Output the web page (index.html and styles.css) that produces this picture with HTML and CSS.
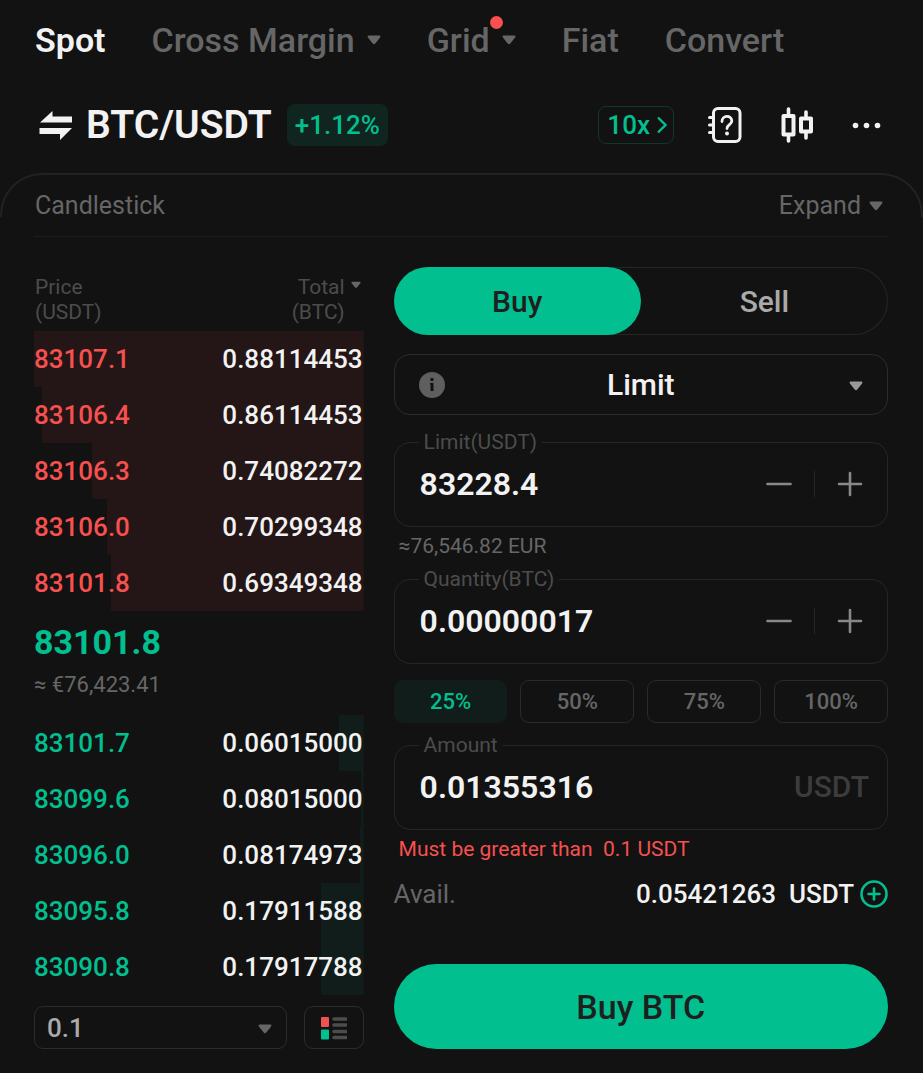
FILE: index.html
```html
<!DOCTYPE html>
<html lang="en">
<head>
    <meta charset="UTF-8">
    <meta name="viewport" content="width=device-width, initial-scale=1.0">
    <title>BTC/USDT Spot</title>
    <link rel="stylesheet" href="styles.css">
</head>
<body>
    <svg class="sprite" aria-hidden="true">
        <symbol id="caret" viewBox="0 0 14 10">
            <path d="M1.5 0.5h11c1 0 1.2 1.2 0.6 1.9L8.3 8.6c-0.8 0.9-1.8 0.9-2.6 0L0.9 2.4C0.3 1.7 0.5 0.5 1.5 0.5z" fill="currentColor"/>
        </symbol>
        <symbol id="minus" viewBox="0 0 26 26">
            <path d="M1.500 13h23" stroke="currentColor" stroke-width="2.6" stroke-linecap="round"/>
        </symbol>
        <symbol id="plus" viewBox="0 0 26 26">
            <path d="M2 13h22M13 2v22" stroke="currentColor" stroke-width="2.6" stroke-linecap="round"/>
        </symbol>
    </svg>

    <nav class="tabs">
        <a href="#" class="active">Spot</a>
        <a href="#">Cross Margin <svg class="caret"><use href="#caret"/></svg></a>
        <a href="#" class="has-dot">Grid <svg class="caret"><use href="#caret"/></svg></a>
        <a href="#">Fiat</a>
        <a href="#">Convert</a>
    </nav>

    <header class="pair">
        <button class="icon-btn swap" aria-label="Switch pair">
            <svg width="36" height="36" viewBox="0 0 36 36" fill="currentColor">
                <path d="M2 15.500L14.500 4v5.500H34v6z"/>
                <path d="M34 21L22 33v-6H1.500v-6z"/>
            </svg>
        </button>
        <h1>BTC/USDT</h1>
        <span class="change">+1.12%</span>
        <div class="tools">
            <button class="leverage">10x
                <svg width="10" height="18" viewBox="0 0 10 18" fill="none" stroke="currentColor" stroke-width="2.400"><path d="M1 1.500L8.500 9 1 16.500"/></svg>
            </button>
            <button class="icon-btn" aria-label="Guide">
                <svg width="36" height="38" viewBox="0 0 36 38" fill="none" stroke="currentColor" stroke-width="3" stroke-linecap="round">
                    <rect x="5.500" y="2.500" width="26.500" height="33" rx="4.500"/>
                    <path d="M1.500 11.500h4M1.500 19h4M1.500 26.500h4" stroke-width="3"/>
                    <path d="M14 15.500c0-6.800 9.800-6.600 9.800-0.500 0 3.800-4.800 3.600-4.800 7.500" stroke-width="2.800"/>
                    <circle cx="19" cy="27.500" r="2" fill="currentColor" stroke="none"/>
                </svg>
            </button>
            <button class="icon-btn" aria-label="Chart">
                <svg width="36" height="38" viewBox="0 0 36 38" fill="none" stroke="currentColor" stroke-width="4">
                    <path d="M5.500 10h10v18.500h-10zM23 12.500h10v13H23z" stroke-linejoin="round"/>
                    <path d="M10.500 3v6M10.500 29v6M28 6v6M28 26v6" stroke-width="3.600" stroke-linecap="round"/>
                </svg>
            </button>
            <button class="icon-btn" aria-label="More">
                <svg width="36" height="38" viewBox="0 0 36 38" fill="currentColor">
                    <circle cx="7.500" cy="19.500" r="2.800"/><circle cx="18.500" cy="19.500" r="2.800"/><circle cx="29.500" cy="19.500" r="2.800"/>
                </svg>
            </button>
        </div>
    </header>

    <main class="panel">
        <div class="chart-bar">
            <span>Candlestick</span>
            <button class="expand">Expand <svg class="caret"><use href="#caret"/></svg></button>
        </div>

        <div class="trade">
            <section class="book">
                <table>
                    <thead>
                        <tr>
                            <th>Price<br>(USDT)</th>
                            <th class="total">Total<svg class="caret"><use href="#caret"/></svg><br>(BTC)</th>
                        </tr>
                    </thead>
                    <tbody class="asks">
                        <tr style="--depth: 100%"><td>83107.1</td><td>0.88114453</td></tr>
                        <tr style="--depth: 97.6%"><td>83106.4</td><td>0.86114453</td></tr>
                        <tr style="--depth: 82.4%"><td>83106.3</td><td>0.74082272</td></tr>
                        <tr style="--depth: 77.9%"><td>83106.0</td><td>0.70299348</td></tr>
                        <tr style="--depth: 76.7%"><td>83101.8</td><td>0.69349348</td></tr>
                    </tbody>
                    <tbody class="last">
                        <tr>
                            <td colspan="2">
                                <strong>83101.8</strong>
                                <span>≈ €76,423.41</span>
                            </td>
                        </tr>
                    </tbody>
                    <tbody class="bids">
                        <tr style="--depth: 7.4%"><td>83101.7</td><td>0.06015000</td></tr>
                        <tr style="--depth: 0.9%"><td>83099.6</td><td>0.08015000</td></tr>
                        <tr style="--depth: 1.2%"><td>83096.0</td><td>0.08174973</td></tr>
                        <tr style="--depth: 13%"><td>83095.8</td><td>0.17911588</td></tr>
                        <tr style="--depth: 13%"><td>83090.8</td><td>0.17917788</td></tr>
                    </tbody>
                </table>
                <div class="book-options">
                    <div class="select step">
                        <select aria-label="Price step">
                            <option>0.1</option>
                            <option>1</option>
                            <option>10</option>
                        </select>
                        <svg class="caret"><use href="#caret"/></svg>
                    </div>
                    <button class="layout-btn" aria-label="Order book layout">
                        <svg width="26" height="24" viewBox="0 0 26 24">
                            <rect x="0" y="1" width="8" height="10" rx="1" fill="#ef5350"/>
                            <rect x="0" y="13.500" width="8" height="10" rx="1" fill="#02bf8f"/>
                            <path d="M13 3h12M13 9h12M13 15.500h12M13 21.500h12" stroke="#4c4c4c" stroke-width="3.600" stroke-linecap="round"/>
                        </svg>
                    </button>
                </div>
            </section>

            <form class="order">
                <div class="sides">
                    <button type="button" class="active">Buy</button>
                    <button type="button">Sell</button>
                </div>

                <div class="select type">
                    <svg class="info" viewBox="0 0 26 26">
                        <circle cx="13" cy="13" r="13" fill="#5f5f5f"/>
                        <circle cx="13" cy="7.500" r="1.700" fill="#121212"/>
                        <path d="M11 11h3.500v8h-3v-6.500H11z" fill="#121212"/>
                    </svg>
                    <select aria-label="Order type">
                        <option>Limit</option>
                        <option>Market</option>
                    </select>
                    <svg class="caret"><use href="#caret"/></svg>
                </div>

                <fieldset>
                    <legend><label for="price">Limit(USDT)</label></legend>
                    <input type="text" id="price" value="83228.4">
                    <button type="button" aria-label="Decrease price"><svg><use href="#minus"/></svg></button>
                    <button type="button" aria-label="Increase price"><svg><use href="#plus"/></svg></button>
                </fieldset>
                <p class="note">≈76,546.82 EUR</p>

                <fieldset>
                    <legend><label for="quantity">Quantity(BTC)</label></legend>
                    <input type="text" id="quantity" value="0.00000017">
                    <button type="button" aria-label="Decrease quantity"><svg><use href="#minus"/></svg></button>
                    <button type="button" aria-label="Increase quantity"><svg><use href="#plus"/></svg></button>
                </fieldset>

                <div class="percents">
                    <button type="button" class="active">25%</button>
                    <button type="button">50%</button>
                    <button type="button">75%</button>
                    <button type="button">100%</button>
                </div>

                <fieldset class="amount">
                    <legend><label for="amount">Amount</label></legend>
                    <input type="text" id="amount" value="0.01355316">
                    <span class="unit">USDT</span>
                </fieldset>
                <p class="note error">Must be greater than&nbsp; 0.1 USDT</p>

                <div class="avail">
                    <span>Avail.</span>
                    <span class="balance">0.05421263&nbsp; USDT</span>
                    <button type="button" class="icon-btn" aria-label="Deposit">
                        <svg width="28" height="28" viewBox="0 0 28 28" fill="none" stroke="currentColor" stroke-width="2.600" stroke-linecap="round">
                            <circle cx="14" cy="14" r="12.500"/>
                            <path d="M8.500 14h11M14 8.500v11"/>
                        </svg>
                    </button>
                </div>

                <button type="submit" class="submit">Buy BTC</button>
            </form>
        </div>
    </main>
</body>
</html>
```
FILE: styles.css
```css
* {
    box-sizing: border-box;
}

body {
    margin: 0;
    background-color: #121212;
    color: #f2f2f2;
    font-family: Roboto, sans-serif;
    font-size: 26px;
    line-height: 32px;
}

button, input, select {
    font-family: inherit;
    color: inherit;
    background: none;
    border: 0;
    padding: 0;
    margin: 0;
}

button {
    cursor: pointer;
}

svg {
    display: block;
}

.sprite {
    position: absolute;
    width: 0;
    height: 0;
}

.caret {
    width: 14px;
    height: 10px;
    flex: none;
}

/* top navigation */
.tabs {
    display: flex;
    gap: 46px;
    padding: 20px 35px 0;
    font-size: 34px;
    font-weight: 500;
    line-height: 40px;
}

.tabs a {
    display: flex;
    align-items: center;
    gap: 12px;
    color: #666;
    text-decoration: none;
    white-space: nowrap;
}

.tabs a.active {
    color: #f2f2f2;
    font-weight: 600;
}

.has-dot {
    position: relative;
}

.has-dot::after {
    content: "";
    position: absolute;
    top: -4px;
    right: 13px;
    width: 13px;
    height: 13px;
    border-radius: 50%;
    background-color: #f6504f;
}

/* pair header */
.pair {
    display: flex;
    align-items: center;
    height: 42px;
    margin: 44px 39px 27px 38px;
}

.pair h1 {
    margin: 0 15px 0 12px;
    font-size: 39px;
    font-weight: 600;
    line-height: 42px;
}

.change {
    padding: 0 8px;
    border-radius: 8px;
    background-color: #10251f;
    color: #02bf8f;
    font-weight: 500;
    line-height: 42px;
}

.tools {
    display: flex;
    align-items: center;
    gap: 34px;
    margin-left: auto;
}

.leverage {
    display: flex;
    align-items: center;
    gap: 7px;
    height: 38px;
    padding: 0 6px 0 8px;
    border: 1px solid #10372c;
    border-radius: 8px;
    color: #02bf8f;
    font-size: 26px;
    font-weight: 500;
}

.icon-btn {
    display: block;
}

/* panel */
.panel {
    position: relative;
    padding: 2px 35px 24px 34px;
}

.panel::before {
    content: "";
    position: absolute;
    top: 0;
    left: 0;
    right: 0;
    height: 42px;
    border: 2px solid #222;
    border-bottom: 0;
    border-radius: 42px 42px 0 0;
    pointer-events: none;
}

.chart-bar {
    display: flex;
    justify-content: space-between;
    align-items: center;
    height: 62px;
    padding: 0 5px 0 1px;
    border-bottom: 1px solid #1d1d1d;
    color: #666;
    font-size: 25px;
}

.expand {
    display: flex;
    align-items: center;
    gap: 8px;
    font-size: 25px;
}

.trade {
    display: grid;
    grid-template-columns: 2fr 3fr;
    gap: 30px;
    padding-top: 30px;
}

/* order book */
.book {
    display: flex;
    flex-direction: column;
    justify-content: space-between;
}

.book table {
    width: 100%;
    border-collapse: collapse;
    font-weight: 500;
}

.book th {
    height: 64px;
    padding: 2px 0 0 1px;
    color: #4c4c4c;
    font-size: 21px;
    font-weight: 400;
    line-height: 25px;
    text-align: left;
}

.book th.total {
    padding-right: 19px;
    text-align: right;
}

.total .caret {
    display: inline-block;
    width: 10px;
    height: 8px;
    margin: 0 -16px 5px 6px;
    color: #666;
}

.book td {
    height: 56px;
    padding: 0;
}

.asks td:last-child,
.bids td:last-child {
    padding-right: 1px;
    text-align: right;
}

.asks tr {
    background: linear-gradient(to left, #241616 var(--depth), transparent var(--depth));
}

.bids tr {
    background: linear-gradient(to left, #101d1a var(--depth), transparent var(--depth));
}

.asks td:first-child {
    color: #f6504f;
}

.bids td:first-child {
    color: #02bf8f;
}

.book .last td {
    height: 104px;
}

.last strong {
    display: block;
    color: #02bf8f;
    font-size: 34px;
    font-weight: 700;
    line-height: 44px;
}

.last span {
    display: block;
    color: #666;
    font-size: 22px;
    font-weight: 400;
    line-height: 42px;
}

.book-options {
    display: flex;
    gap: 17px;
    height: 43px;
}

.select {
    position: relative;
}

.select select {
    width: 100%;
    height: 100%;
    appearance: none;
    border: 1px solid #2c2c2c;
    font-weight: 500;
}

.select option {
    background-color: #121212;
}

.select .caret {
    position: absolute;
    top: calc(50% - 4px);
    right: 25px;
    color: #999;
    pointer-events: none;
}

.step {
    flex: 1;
}

.step select {
    padding-left: 12px;
    border-radius: 9px;
    color: #aaa;
    font-size: 26px;
}

.step .caret {
    right: 15px;
    color: #666;
}

.layout-btn {
    display: flex;
    align-items: center;
    justify-content: center;
    width: 60px;
    border: 1px solid #2c2c2c;
    border-radius: 9px;
}

/* order form */
.order {
    display: flex;
    flex-direction: column;
    min-width: 0;
}

.sides {
    display: flex;
    height: 68px;
    border-radius: 34px;
    box-shadow: inset 0 0 0 1px #262626;
}

.sides button {
    flex: 1;
    border-radius: 34px;
    color: #aaa;
    font-size: 30px;
    font-weight: 500;
}

.sides button.active {
    background-color: #02bf8f;
    color: #1f1f1f;
}

.type {
    height: 61px;
    margin: 19px 0 15px;
}

.type select {
    border-radius: 16px;
    font-size: 30px;
    text-align: center;
    text-align-last: center;
}

.info {
    position: absolute;
    top: 18px;
    left: 25px;
    width: 26px;
    height: 26px;
}

fieldset {
    display: flex;
    align-items: center;
    min-width: 0;
    height: 97px;
    margin: 0;
    padding: 0 13px 0 25px;
    border: 1px solid #262626;
    border-radius: 16px;
}

legend {
    padding: 0 5px;
    margin-left: -1px;
    color: #4c4c4c;
    font-size: 21px;
    line-height: 24px;
}

input {
    flex: 1;
    min-width: 0;
    height: 60px;
    font-size: 32px;
    font-weight: 600;
    outline: none;
}

fieldset button {
    display: flex;
    align-items: center;
    justify-content: center;
    width: 60px;
    height: 26px;
    color: #888;
}

fieldset button svg {
    width: 26px;
    height: 26px;
}

fieldset button:first-of-type {
    padding-right: 11px;
}

fieldset button:last-of-type {
    padding-left: 11px;
    border-left: 1px solid #262626;
}

.amount {
    padding-right: 18px;
}

.unit {
    color: #3c3c3c;
    font-size: 30px;
    font-weight: 500;
}

.note {
    margin: 6px 0 8px;
    padding-left: 5px;
    color: #666;
    font-size: 21px;
    line-height: 26px;
}

.note.error {
    margin-bottom: 16px;
    color: #f6504f;
}

.percents {
    display: flex;
    gap: 13px;
    margin: 16px 0 10px;
}

.percents button {
    flex: 1;
    height: 43px;
    border: 1px solid #2a2a2a;
    border-radius: 9px;
    color: #666;
    font-size: 22px;
    font-weight: 500;
}

.percents button.active {
    background-color: #101d1a;
    border-color: #101d1a;
    color: #02bf8f;
}

.avail {
    display: flex;
    align-items: center;
    margin-bottom: 54px;
    color: #666;
}

.balance {
    margin: 0 6px 0 auto;
    color: #f2f2f2;
    font-weight: 500;
}

.avail .icon-btn {
    color: #02bf8f;
}

.submit {
    height: 85px;
    margin-top: auto;
    border-radius: 43px;
    background-color: #02bf8f;
    color: #1f1f1f;
    font-size: 34px;
    font-weight: 500;
}
```
